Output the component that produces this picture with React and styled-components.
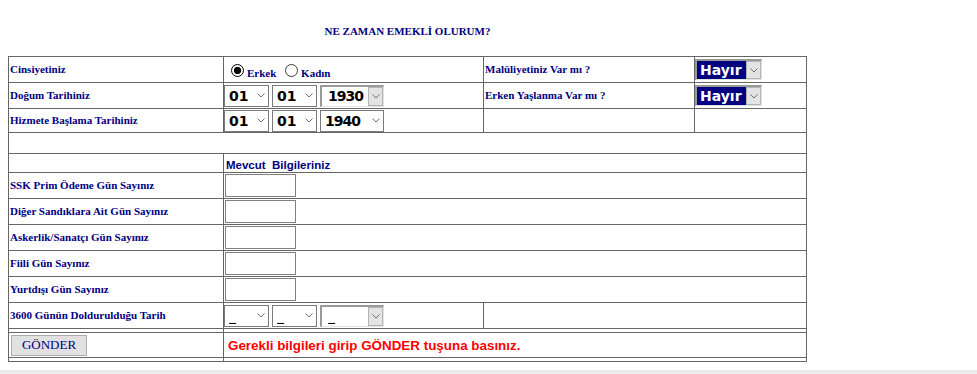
import React from "react";
import styled, { createGlobalStyle, css } from "styled-components";

const NAVY = "#000080";

const Global = createGlobalStyle`
  html, body { margin: 0; padding: 0; background: #fff; }
  body { font-family: "Liberation Serif", "Times New Roman", serif; }
`;

const Page = styled.div`
  padding: 8px 8px 0;
`;

const Title = styled.div`
  width: 799px;
  margin: 17px 0 18px;
  text-align: center;
  font: bold 11px/13px "Liberation Serif", "Times New Roman", serif;
  color: ${NAVY};
`;

const FormGrid = styled.div`
  display: grid;
  width: max-content;
  grid-template-columns: 214px 259px 210px 111px;
  grid-template-rows: 25px 25px 23px 20px 18px 25px 25px 25px 25px 25px 25px 3px 24px 3px;
  gap: 1px;
  padding: 1px;
  background: #666;
`;

const Cell = styled.div`
  background: #fff;
  display: flex;
  align-items: center;
  padding: 0 ${(p) => p.$px ?? 1}px;
  grid-column: span ${(p) => p.$span || 1};
  min-width: 0;
  overflow: hidden;
`;

const Label = styled.span`
  font: bold 11px/13px "Liberation Serif", "Times New Roman", serif;
  color: ${NAVY};
  white-space: nowrap;
`;

const RadioGroup = styled.span`
  display: block;
  font: bold 11px/13px "Liberation Serif", "Times New Roman", serif;
  color: ${NAVY};
  white-space: nowrap;
  padding: 1px 0 0 1px;
`;

const Radio = styled.input.attrs({ type: "radio" })`
  appearance: none;
  -webkit-appearance: none;
  box-sizing: border-box;
  width: 13px;
  height: 13px;
  margin: 3px 3px 0 6px;
  border-radius: 50%;
  border: 1px solid #3a3a3a;
  background: #fff;
  vertical-align: baseline;
  outline: none;
  &:checked {
    border-color: #000;
    background: radial-gradient(circle, #000 0 3.4px, #fff 3.9px);
  }
`;

const SelectRow = styled.div`
  display: flex;
  align-items: center;
  gap: 3px;
`;

const SelectWrap = styled.span`
  position: relative;
  display: inline-flex;
  width: ${(p) => p.$w}px;
  height: ${(p) => p.$h || 22}px;
  flex: none;
`;

const NativeSelect = styled.select`
  appearance: none;
  -webkit-appearance: none;
  box-sizing: border-box;
  width: 100%;
  height: 100%;
  margin: 0;
  border-radius: 0;
  outline: none;
  font: bold 14px "DejaVu Sans", Verdana, sans-serif;
  letter-spacing: ${(p) => (p.$tight ? "-1px" : "normal")};
  color: #000;
  background: #fff;
  border: 1px solid #7a7a7a;
  padding: 0 0 0 4px;
  ${(p) =>
    p.$classic &&
    css`
      border-style: solid;
      border-width: 2px 1px 1px 2px;
      border-color: #9a9a9a #e2e2e2 #e2e2e2 #9a9a9a;
      padding-left: ${p.$dark ? 3 : 6}px;
    `}
  ${(p) =>
    p.$dark &&
    css`
      background: ${NAVY};
      color: #fff;
    `}
`;

const ArrowSlot = styled.span`
  position: absolute;
  pointer-events: none;
  display: flex;
  align-items: center;
  justify-content: center;
  top: 0;
  bottom: 0;
  right: 4px;
  width: 9px;
  ${(p) =>
    p.$classic &&
    css`
      top: 2px;
      bottom: 1px;
      right: 1px;
      width: 15px;
      box-sizing: border-box;
      background: #e3e3e3;
      border: 1px solid #b4b4b4;
    `}
`;

const TextInput = styled.input.attrs({ type: "text" })`
  box-sizing: border-box;
  width: 71px;
  height: 23px;
  margin: 0;
  border: 1px solid #808080;
  border-radius: 0;
  padding: 0 3px;
  font: 13px "Liberation Sans", Arial, sans-serif;
  outline: none;
`;

const SectionHeading = styled.span`
  font: bold 11.5px/14px "Liberation Sans", Tahoma, Arial, sans-serif;
  color: ${NAVY};
  white-space: pre;
  padding: 3px 0 0 1px;
`;

const SubmitButton = styled.button`
  box-sizing: border-box;
  width: 76px;
  height: 21px;
  margin: 0 0 0 1px;
  padding: 0;
  background: #e1e1e1;
  border: 1px solid #adadad;
  border-radius: 0;
  font: 13px "Liberation Serif", "Times New Roman", serif;
  color: ${NAVY};
  cursor: pointer;
`;

const Notice = styled.span`
  font: bold 13.4px "Liberation Sans", Tahoma, Arial, sans-serif;
  color: #ff0000;
  padding-left: 3px;
  white-space: nowrap;
`;

const BottomBar = styled.div`
  margin: 8px -8px 0;
  height: 12px;
  background: #ebebeb;
`;

const Chevron = () => (
  <svg width="8" height="5" viewBox="0 0 8 5" aria-hidden="true">
    <polyline points="0.5,0.5 4,4 7.5,0.5" fill="none" stroke="#6e6e6e" strokeWidth="1" />
  </svg>
);

const pad = (n) => String(n).padStart(2, "0");
const days = ["__", ...Array.from({ length: 31 }, (_, i) => pad(i + 1))];
const months = ["__", ...Array.from({ length: 12 }, (_, i) => pad(i + 1))];
const years = ["__", ...Array.from({ length: 96 }, (_, i) => String(1930 + i))];

function Select({ w, h, classic, dark, tight, options, value }) {
  return (
    <SelectWrap $w={w} $h={h}>
      <NativeSelect $classic={classic} $dark={dark} $tight={tight} defaultValue={value}>
        {options.map((o) => (
          <option key={o} value={o}>
            {o === "__" ? "_" : o}
          </option>
        ))}
      </NativeSelect>
      <ArrowSlot $classic={classic}>
        <Chevron />
      </ArrowSlot>
    </SelectWrap>
  );
}

function DateSelects({ d, m, y, classicYear }) {
  return (
    <SelectRow>
      <Select w={45} options={days} value={d} />
      <Select w={45} options={months} value={m} />
      <Select w={64} classic={classicYear} tight options={years} value={y} />
    </SelectRow>
  );
}

const YesNo = () => (
  <Select w={67} h={21} classic dark options={["Hayır", "Evet"]} value="Hayır" />
);

const countRows = [
  "SSK Prim Ödeme Gün Sayınız",
  "Diğer Sandıklara Ait Gün Sayınız",
  "Askerlik/Sanatçı Gün Sayınız",
  "Fiili Gün Sayınız",
  "Yurtdışı Gün Sayınız",
];

export default function App() {
  return (
    <>
      <Global />
      <Page>
        <Title>NE ZAMAN EMEKLİ OLURUM?</Title>
        <FormGrid>
          <Cell>
            <Label>Cinsiyetiniz</Label>
          </Cell>
          <Cell $px={0}>
            <RadioGroup>
              <Radio name="cinsiyet" defaultChecked />
              Erkek <Radio name="cinsiyet" />
              Kadın
            </RadioGroup>
          </Cell>
          <Cell>
            <Label>Malüliyetiniz Var mı ?</Label>
          </Cell>
          <Cell $px={0}>
            <YesNo />
          </Cell>

          <Cell>
            <Label>Doğum Tarihiniz</Label>
          </Cell>
          <Cell $px={0}>
            <DateSelects d="01" m="01" y="1930" classicYear />
          </Cell>
          <Cell>
            <Label>Erken Yaşlanma Var mı ?</Label>
          </Cell>
          <Cell $px={0}>
            <YesNo />
          </Cell>

          <Cell>
            <Label>Hizmete Başlama Tarihiniz</Label>
          </Cell>
          <Cell $px={0}>
            <DateSelects d="01" m="01" y="1940" />
          </Cell>
          <Cell />
          <Cell />

          <Cell $span={4} />

          <Cell />
          <Cell $span={3}>
            <SectionHeading>Mevcut  Bilgileriniz</SectionHeading>
          </Cell>

          {countRows.map((label) => (
            <React.Fragment key={label}>
              <Cell>
                <Label>{label}</Label>
              </Cell>
              <Cell $span={3}>
                <TextInput />
              </Cell>
            </React.Fragment>
          ))}

          <Cell>
            <Label>3600 Günün Doldurulduğu Tarih</Label>
          </Cell>
          <Cell $px={0}>
            <DateSelects d="__" m="__" y="__" classicYear />
          </Cell>
          <Cell $span={2} />

          <Cell />
          <Cell $span={3} />

          <Cell>
            <SubmitButton type="button">GÖNDER</SubmitButton>
          </Cell>
          <Cell $span={3}>
            <Notice>Gerekli bilgileri girip GÖNDER tuşuna basınız.</Notice>
          </Cell>

          <Cell />
          <Cell $span={3} />
        </FormGrid>
        <BottomBar />
      </Page>
    </>
  );
}
